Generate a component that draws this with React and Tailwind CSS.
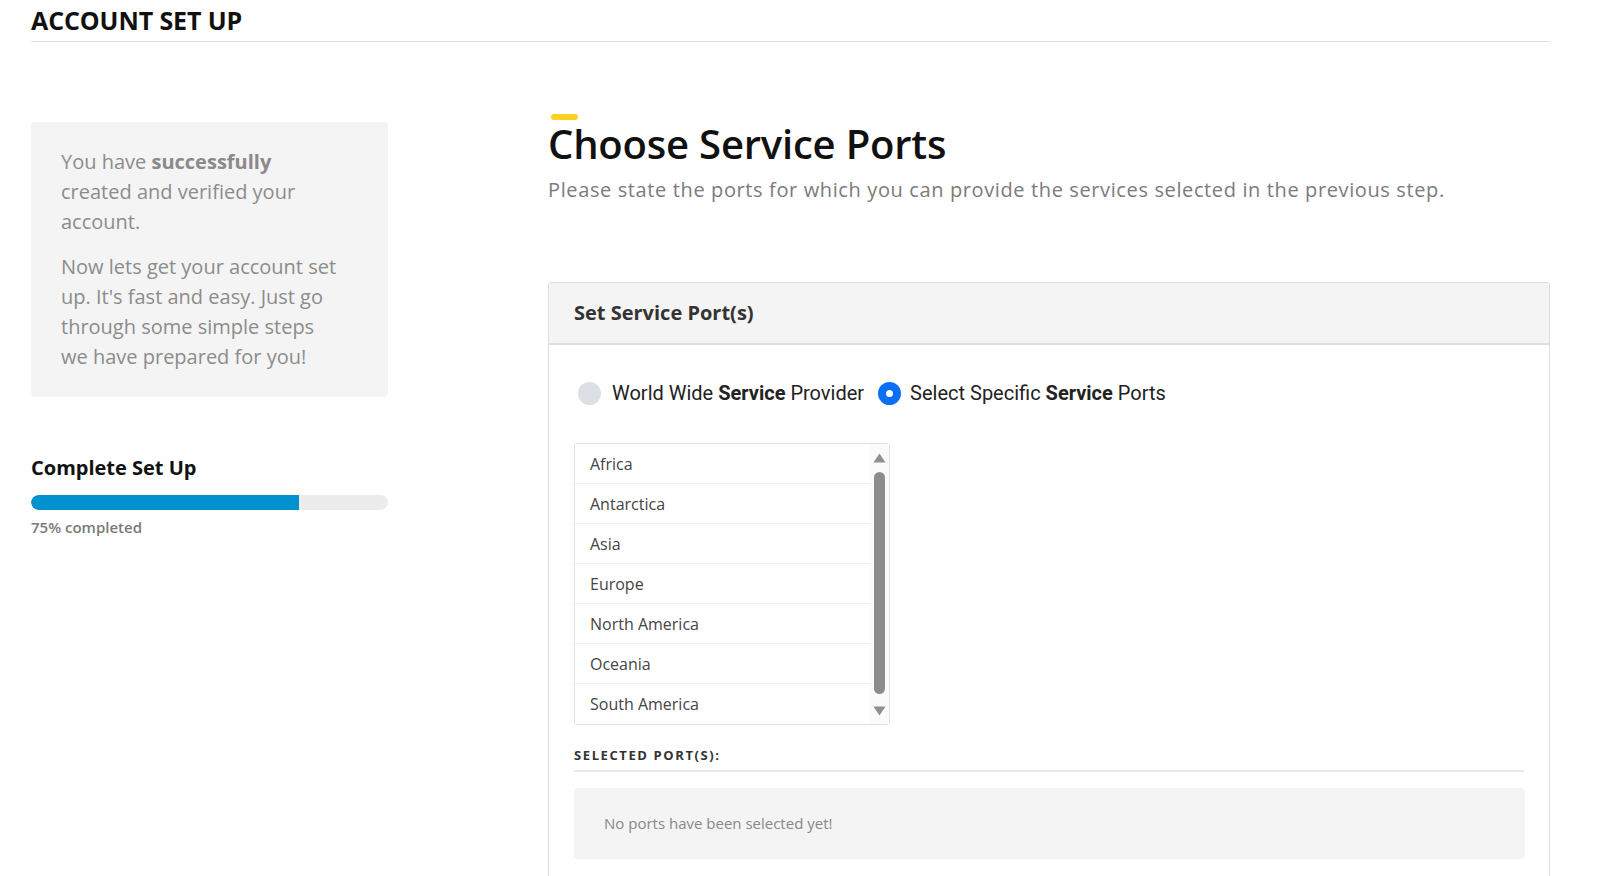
import React from "react";

const regions = ["Africa", "Antarctica", "Asia", "Europe", "North America", "Oceania", "South America"];

export default function App() {
  return (
    <div className="w-[1612px] h-[876px] overflow-hidden bg-white font-['Open_Sans',sans-serif]">
      <div className="ml-[31px] w-[1519px]">
        <div className="h-[42px] border-b border-[#e2e2e2] flex items-center">
          <h1 className="text-[25px] font-bold text-[#111] leading-none tracking-[-0.1px]">ACCOUNT SET UP</h1>
        </div>
        <div className="flex">
          {/* left column */}
          <div className="w-[357px] shrink-0 pt-[80px]">
            <div className="rounded-[4px] bg-[#f4f4f4] pl-[30px] py-[25px] text-[20px] leading-[30px] text-[#8c8c8c]">
              <p className="w-[282px]">
                You have <span className="font-bold text-[#8a8a8a]">successfully</span> created and verified your account.
              </p>
              <p className="w-[282px] mt-[15px]">
                Now lets get your account set up. It's fast and easy. Just go through some simple steps we have prepared for you!
              </p>
            </div>
            <div className="mt-[57px] text-[20px] leading-[28px] font-bold text-[#111]">Complete Set Up</div>
            <div className="mt-[13px] h-[15px] rounded-full bg-[#ececec] overflow-hidden">
              <div className="h-full w-[75%] bg-[#0091cf] rounded-l-full" />
            </div>
            <div className="mt-[7px] text-[15px] leading-[20px] font-semibold text-[#7a7a7a]">75% completed</div>
          </div>

          {/* right column */}
          <div className="ml-[160px] w-[1002px] pt-[72px]">
            <div className="ml-[3px] w-[27px] h-[6px] rounded-full bg-[#fdd022]" />
            <h2 className="text-[40px] leading-[48px] font-semibold text-[#111] tracking-[-0.2px]">Choose Service Ports</h2>
            <p className="mt-[8px] text-[20px] leading-[28px] text-[#7b7b7b] tracking-[0.62px]">
              Please state the ports for which you can provide the services selected in the previous step.
            </p>

            <div className="mt-[78px] border border-[#dedede] rounded-t-[3px]">
              <div className="h-[62px] bg-[#f4f4f4] border-b-2 border-[#dedede] flex items-center pl-[25px]">
                <span className="text-[20px] font-bold text-[#333]">Set Service Port(s)</span>
              </div>
              <div className="px-[25px] pt-[33px] pb-[40px]">
                <div className="flex items-center gap-[14px] font-['Roboto',sans-serif] text-[20px] text-[#222]">
                  <label className="flex items-center gap-[11px] ml-[4px]">
                    <span className="w-[23px] h-[23px] rounded-full bg-[#dcdfe3]" />
                    <span>World Wide <b className="font-bold">Service</b> Provider</span>
                  </label>
                  <label className="flex items-center gap-[9px]">
                    <span className="w-[23px] h-[23px] rounded-full bg-[#0b6ff6] flex items-center justify-center">
                      <span className="w-[7px] h-[7px] rounded-full bg-white" />
                    </span>
                    <span>Select Specific <b className="font-bold">Service</b> Ports</span>
                  </label>
                </div>

                <div className="mt-[35px] w-[316px] h-[282px] border border-[#e3e3e3] rounded-[3px] flex overflow-hidden">
                  <div className="flex-1">
                    {regions.map((r, i) => (
                      <div
                        key={r}
                        className={`h-[40px] flex items-center pl-[15px] text-[16px] text-[#444] ${i < regions.length - 1 ? "border-b border-[#ececec]" : ""}`}
                      >
                        {r}
                      </div>
                    ))}
                  </div>
                  <div className="w-[19px] bg-[#fafafa] flex flex-col items-center pt-[9px] pb-[8px]">
                    <svg width="13" height="10" viewBox="0 0 13 10" className="shrink-0">
                      <path d="M6.5 0.5 L12.5 9.5 L0.5 9.5 Z" fill="#8f8f8f" />
                    </svg>
                    <div className="mt-[9px] w-[11px] flex-1 rounded-full bg-[#8c8c8c]" />
                    <svg width="13" height="10" viewBox="0 0 13 10" className="shrink-0 mt-[12px]">
                      <path d="M0.5 0.5 L12.5 0.5 L6.5 9.5 Z" fill="#8f8f8f" />
                    </svg>
                  </div>
                </div>

                <div className="mt-[21px] w-[950px] pb-[6px] border-b-2 border-[#e9e9e9] text-[13px] font-bold tracking-[1.6px] text-[#333] leading-[18px]">
                  SELECTED PORT(S):
                </div>
                <div className="mt-[16px] w-[951px] h-[71px] rounded-[4px] bg-[#f4f4f4] flex items-center pl-[30px] text-[15px] text-[#888]">
                  No ports have been selected yet!
                </div>
              </div>
            </div>
          </div>
        </div>
      </div>
    </div>
  );
}
